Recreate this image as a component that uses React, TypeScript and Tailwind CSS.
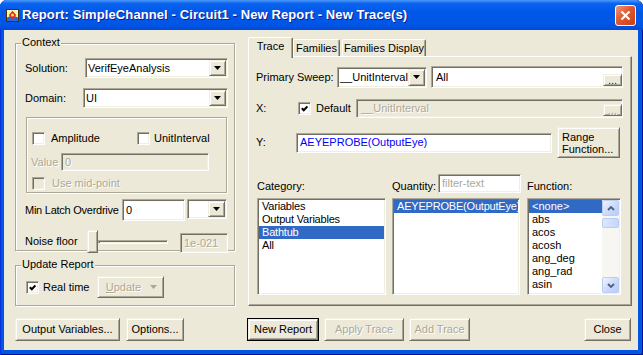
import React from "react";

type Kids = { className?: string; children?: React.ReactNode };

// classic 3D edges on the XP "beige" palette
const SUNKEN =
  "border border-[#ACA899] border-b-white border-r-white shadow-[inset_1px_1px_0_#716F64,inset_-1px_-1px_0_#F1EFE2]";
const RAISED =
  "border border-[#F1EFE2] border-b-[#716F64] border-r-[#716F64] shadow-[inset_1px_1px_0_#fff,inset_-1px_-1px_0_#ACA899]";
const ETCHED = "border border-[#ACA899] shadow-[inset_1px_1px_0_#fff,1px_1px_0_#fff]";
const DIS = "text-[#ACA899] [text-shadow:1px_1px_0_#fff]";

function Tri({ color = "#000" }: { color?: string }) {
  return (
    <svg width="7" height="4" viewBox="0 0 7 4">
      <path d="M0 0H7L3.5 4Z" fill={color} />
    </svg>
  );
}

function Check({ checked, disabled }: { checked?: boolean; disabled?: boolean }) {
  return (
    <div
      className={`w-[13px] h-[13px] shrink-0 flex items-center justify-center ${SUNKEN} ${
        disabled ? "bg-[#ECE9D8]" : "bg-white"
      }`}
    >
      {checked && (
        <svg width="7" height="7" viewBox="0 0 7 7">
          <path d="M0.8 3.2L2.8 5.2L6.4 1.4" fill="none" stroke="#000" strokeWidth="2" />
        </svg>
      )}
    </div>
  );
}

function Combo({ className = "", value = "" }: { className?: string; value?: string }) {
  return (
    <div className={`${SUNKEN} bg-white flex items-stretch p-[1px] shrink-0 ${className}`}>
      <span className="flex-1 overflow-hidden whitespace-nowrap pl-[1px] self-center">{value}</span>
      <div className={`${RAISED} w-[17px] bg-[#ECE9D8] flex items-center justify-center shrink-0`}>
        <Tri />
      </div>
    </div>
  );
}

function Field({ className = "", children }: Kids) {
  return (
    <div className={`${SUNKEN} flex items-center px-[3px] whitespace-nowrap overflow-hidden shrink-0 ${className}`}>
      {children}
    </div>
  );
}

function Btn({
  className = "",
  children,
  disabled,
  def,
}: Kids & { disabled?: boolean; def?: boolean }) {
  const inner = (
    <div
      className={`${RAISED} bg-[#ECE9D8] flex items-center justify-center w-full h-full ${disabled ? DIS : ""}`}
    >
      {children}
    </div>
  );
  return <div className={`shrink-0 ${def ? "border border-black" : ""} ${className}`}>{inner}</div>;
}

function Dots({ disabled }: { disabled?: boolean }) {
  return (
    <div
      className={`${RAISED} w-[19px] h-[12px] bg-[#ECE9D8] flex items-end justify-center shrink-0 leading-[10px] ${
        disabled ? DIS : "text-[#0000FF]"
      }`}
    >
      ...
    </div>
  );
}

function Group({ label, className = "", children }: Kids & { label?: string }) {
  return (
    <div className={`relative ${ETCHED} ${className}`}>
      {label && <span className="absolute left-[5px] -top-[8px] px-[1px] bg-[#ECE9D8]">{label}</span>}
      {children}
    </div>
  );
}

function ListBox({ className = "", items, selected }: { className?: string; items: string[]; selected: number }) {
  return (
    <div className={`${SUNKEN} bg-white p-[1px] overflow-hidden shrink-0 ${className}`}>
      {items.map((it, i) => (
        <div
          key={it}
          className={`h-[13px] pl-[3px] whitespace-nowrap tracking-[-0.2px] ${
            i === selected ? "bg-[#316AC5] text-white" : ""
          }`}
        >
          {it}
        </div>
      ))}
    </div>
  );
}

function ScrollBtn({ up }: { up?: boolean }) {
  return (
    <div className="h-[16px] rounded-[2px] border border-[#BCCDF4] bg-[linear-gradient(135deg,#EEF3FE_0%,#C8D8FB_60%,#B9CCF7_100%)] flex items-center justify-center">
      <svg width="8" height="5" viewBox="0 0 8 5">
        <path d={up ? "M1 4L4 1L7 4" : "M1 1L4 4L7 1"} fill="none" stroke="#4D6185" strokeWidth="1.8" />
      </svg>
    </div>
  );
}

function AppIcon() {
  return (
    <svg width="13" height="13" viewBox="0 0 13 13" className="shrink-0">
      <rect x="0.5" y="0.5" width="12" height="12" fill="#FFF3A8" stroke="#4A3208" />
      <path d="M1 8.5Q6.5 5 12 8.5V12H1Z" fill="#2C66D6" />
      <path d="M6.5 1.8L10.2 6L6.5 10.2L2.8 6Z" fill="#E0261C" />
      <circle cx="6.5" cy="6" r="1.6" fill="#FFE23A" />
    </svg>
  );
}

export default function App() {
  return (
    <div className="w-[643px] h-[355px] bg-white font-['Liberation_Sans',Arial,sans-serif] text-[11px] leading-[13px] text-black">
      <div className="w-full h-full rounded-t-[7px] bg-[#0055E5] flex flex-col overflow-hidden shadow-[inset_1px_0_0_#0831D9,inset_-1px_0_0_#00138C,inset_0_-1px_0_#00138C]">
        {/* Title bar */}
        <div className="h-[30px] shrink-0 flex items-center pl-[6px] pr-[7px] bg-[linear-gradient(180deg,#4B97FA_0%,#0A63EE_12%,#0058E8_40%,#0056E6_80%,#0049D6_100%)]">
          <AppIcon />
          <span className="ml-[3px] text-white font-bold text-[13px] leading-[16px] tracking-[0.1px] [text-shadow:1px_1px_0_#0F1E8C] whitespace-nowrap">
            Report: SimpleChannel - Circuit1 - New Report - New Trace(s)
          </span>
          <div className="ml-auto w-[21px] h-[21px] rounded-[3px] border border-white bg-[linear-gradient(135deg,#F0967A_0%,#E0582F_45%,#C9400F_100%)] flex items-center justify-center">
            <svg width="11" height="11" viewBox="0 0 11 11">
              <path d="M1.5 1.5L9.5 9.5M9.5 1.5L1.5 9.5" stroke="#fff" strokeWidth="2.2" />
            </svg>
          </div>
        </div>

        {/* Client area */}
        <div className="flex-1 ml-[4px] mr-[5px] mb-[5px] bg-[#ECE9D8] flex flex-col">
          <div className="flex pt-[7px]">
            {/* Left column */}
            <div className="ml-[11px] w-[220px] pt-[6px] flex flex-col">
              <Group label="Context" className="h-[208px]">
                <div className="pl-[9px] pr-[6px] flex flex-col">
                  <div className="mt-[14px] h-[20px] flex items-center">
                    <span className="w-[60px] shrink-0">Solution:</span>
                    <Combo className="w-[143px] h-[20px]" value="VerifEyeAnalysis" />
                  </div>
                  <div className="mt-[10px] h-[20px] flex items-center">
                    <span className="w-[58px] shrink-0">Domain:</span>
                    <Combo className="w-[145px] h-[20px]" value="UI" />
                  </div>

                  <div className={`mt-[9px] ml-[1px] w-[201px] h-[76px] ${ETCHED} flex flex-col`}>
                    <div className="mt-[14px] pl-[5px] h-[13px] flex items-center">
                      <div className="w-[105px] flex items-center">
                        <Check />
                        <span className="ml-[6px]">Amplitude</span>
                      </div>
                      <Check />
                      <span className="ml-[4px]">UnitInterval</span>
                    </div>
                    <div className="mt-[8px] pl-[4px] h-[18px] flex items-center">
                      <span className={`w-[30px] ${DIS}`}>Value</span>
                      <Field className={`w-[148px] h-[18px] bg-[#ECE9D8] ${DIS}`}>0</Field>
                    </div>
                    <div className="mt-[6px] pl-[5px] h-[13px] flex items-center">
                      <Check disabled />
                      <span className={`ml-[7px] ${DIS}`}>Use mid-point</span>
                    </div>
                  </div>

                  <div className="mt-[6px] h-[22px] flex items-center">
                    <span className="w-[97px] shrink-0 whitespace-nowrap tracking-[-0.25px]">Min Latch Overdrive</span>
                    <Field className="w-[63px] h-[22px] bg-white">0</Field>
                    <Combo className="ml-[2px] w-[40px] h-[20px] self-start" />
                  </div>

                  <div className="mt-[9px] h-[23px] flex items-center">
                    <span className="w-[62px] shrink-0">Noise floor</span>
                    <div className={`${RAISED} w-[11px] h-[23px] bg-[#ECE9D8] shrink-0`} />
                    <div className={`${SUNKEN} w-[70px] h-[4px] shrink-0`} />
                    <Field className={`ml-[12px] w-[48px] h-[20px] self-end bg-[#ECE9D8] ${DIS}`}>1e-021</Field>
                  </div>
                </div>
              </Group>

              <Group label="Update Report" className="mt-[14px] h-[41px]">
                <div className="mt-[10px] pl-[10px] h-[22px] flex items-center">
                  <div className="w-[71px] flex items-center">
                    <Check checked />
                    <span className="ml-[4px]">Real time</span>
                  </div>
                  <Btn disabled className="w-[67px] h-[22px]">
                    <span className="ml-[2px]">
                      <span className="underline">U</span>pdate
                    </span>
                    <span className="ml-[9px]">
                      <Tri color="#ACA899" />
                    </span>
                  </Btn>
                </div>
              </Group>
            </div>

            {/* Right column: tabs */}
            <div className="ml-[13px] w-[384px] flex flex-col">
              <div className="h-[19px] flex items-start relative z-10">
                <div className="w-[45px] h-[21px] bg-[#ECE9D8] border-t border-l border-white border-r border-r-[#716F64] rounded-t-[2px] shadow-[inset_-1px_0_0_#ACA899] flex items-center justify-center pb-[3px]">
                  Trace
                </div>
                <div className="mt-[2px] w-[47px] h-[17px] border-t border-l border-white border-r border-r-[#716F64] rounded-t-[2px] shadow-[inset_-1px_0_0_#ACA899] flex items-center justify-center">
                  Families
                </div>
                <div className="mt-[2px] ml-[2px] w-[84px] h-[17px] border-t border-l border-white border-r border-r-[#716F64] rounded-t-[2px] shadow-[inset_-1px_0_0_#ACA899] flex items-center justify-center">
                  Families Display
                </div>
              </div>

              <div className="h-[250px] border border-white border-r-[#716F64] border-b-[#716F64] shadow-[inset_-1px_-1px_0_#ACA899] flex flex-col pl-[7px]">
                <div className="mt-[9px] h-[22px] flex items-center">
                  <span className="w-[81px] shrink-0 whitespace-nowrap">Primary Sweep:</span>
                  <Combo className="w-[90px] h-[21px]" value="__UnitInterval" />
                  <div className={`${SUNKEN} ml-[4px] w-[192px] h-[22px] bg-white flex items-center pl-[4px] shrink-0`}>
                    <span className="flex-1">All</span>
                    <div className="self-end mb-[1px]">
                      <Dots />
                    </div>
                  </div>
                </div>

                <div className="mt-[11px] h-[19px] flex items-center">
                  <span className="w-[42px] shrink-0">X:</span>
                  <div className="w-[58px] flex items-center shrink-0">
                    <Check checked />
                    <span className="ml-[5px]">Default</span>
                  </div>
                  <div className={`${SUNKEN} w-[267px] h-[19px] bg-[#ECE9D8] flex items-center pl-[4px] shrink-0`}>
                    <span className={`flex-1 ${DIS}`}>__UnitInterval</span>
                    <div className="self-end mb-[1px]">
                      <Dots disabled />
                    </div>
                  </div>
                </div>

                <div className="mt-[9px] h-[31px] flex items-center">
                  <span className="w-[40px] shrink-0">Y:</span>
                  <Field className="w-[256px] h-[20px] bg-white text-[#0000FF]">AEYEPROBE(OutputEye)</Field>
                  <div className={`${RAISED} ml-[5px] w-[63px] h-[31px] bg-[#ECE9D8] flex flex-col justify-center pl-[4px] leading-[12px] shrink-0`}>
                    <span>Range</span>
                    <span>Function...</span>
                  </div>
                </div>

                <div className="mt-[16px] ml-[1px] h-[19px] flex items-end">
                  <span className="w-[135px] shrink-0">Category:</span>
                  <span className="w-[46px] shrink-0">Quantity:</span>
                  <Field className="w-[83px] h-[19px] bg-white text-[#ACA899]">filter-text</Field>
                  <span className="ml-[6px]">Function:</span>
                </div>

                <div className="mt-[5px] ml-[1px] h-[97px] flex">
                  <ListBox
                    className="w-[129px] h-[97px]"
                    items={["Variables", "Output Variables", "Bathtub", "All"]}
                    selected={2}
                  />
                  <ListBox className="ml-[6px] w-[128px] h-[97px]" items={["AEYEPROBE(OutputEye)"]} selected={0} />
                  <div className={`${SUNKEN} ml-[7px] w-[94px] h-[97px] bg-white p-[1px] flex shrink-0`}>
                    <div className="flex-1 overflow-hidden">
                      {["<none>", "abs", "acos", "acosh", "ang_deg", "ang_rad", "asin", "asinh"].map((f, i) => (
                        <div
                          key={f}
                          className={`h-[13px] pl-[3px] whitespace-nowrap ${i === 0 ? "bg-[#316AC5] text-white" : ""}`}
                        >
                          {f}
                        </div>
                      ))}
                    </div>
                    <div className="w-[17px] bg-[#F7F6F1] flex flex-col shrink-0">
                      <ScrollBtn up />
                      <div className="mt-[2px] h-[10px] rounded-[2px] border border-[#BCCDF4] bg-[linear-gradient(90deg,#DDE7FD,#C6D6FB)]" />
                      <div className="flex-1" />
                      <ScrollBtn />
                    </div>
                  </div>
                </div>
              </div>
            </div>
          </div>

          {/* Bottom buttons */}
          <div className="mt-[12px] h-[23px] flex">
            <Btn className="ml-[11px] w-[105px] h-[23px]">Output Variables...</Btn>
            <Btn className="ml-[6px] w-[58px] h-[23px]">Options...</Btn>
            <Btn def className="ml-[63px] w-[72px] h-[23px]">New Report</Btn>
            <Btn disabled className="ml-[5px] w-[80px] h-[23px]">Apply Trace</Btn>
            <Btn disabled className="ml-[5px] w-[61px] h-[23px]">Add Trace</Btn>
            <Btn className="ml-auto mr-[7px] w-[47px] h-[23px]">Close</Btn>
          </div>
        </div>
      </div>
    </div>
  );
}
